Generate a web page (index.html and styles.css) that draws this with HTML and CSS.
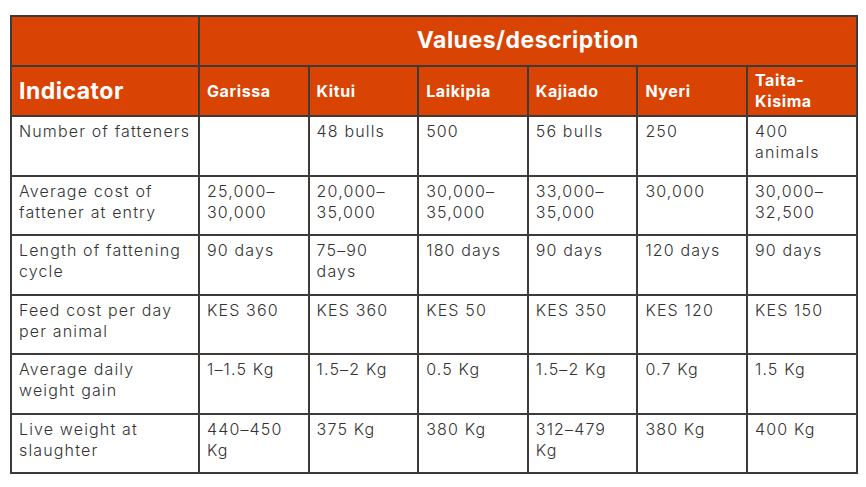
FILE: index.html
```html
<!DOCTYPE html>
<html>
<head>
<meta charset="utf-8">
<link rel="stylesheet" href="styles.css">
</head>
<body>
<table class="data">
  <colgroup>
    <col class="c-ind"><col class="c-v"><col class="c-v"><col class="c-v"><col class="c-v"><col class="c-v"><col class="c-v">
  </colgroup>
  <thead>
    <tr class="h1">
      <th></th>
      <th colspan="6" class="values">Values/description</th>
    </tr>
    <tr class="h2">
      <th class="ind">Indicator</th>
      <th>Garissa</th>
      <th>Kitui</th>
      <th>Laikipia</th>
      <th>Kajiado</th>
      <th>Nyeri</th>
      <th>Taita-<br>Kisima</th>
    </tr>
  </thead>
  <tbody>
    <tr>
      <td>Number of fatteners</td><td></td><td>48 bulls</td><td>500</td><td>56 bulls</td><td>250</td><td>400<br>animals</td>
    </tr>
    <tr>
      <td>Average cost of<br>fattener at entry</td><td>25,000–<br>30,000</td><td>20,000–<br>35,000</td><td>30,000–<br>35,000</td><td>33,000–<br>35,000</td><td>30,000</td><td>30,000–<br>32,500</td>
    </tr>
    <tr>
      <td>Length of fattening<br>cycle</td><td>90 days</td><td>75–90<br>days</td><td>180 days</td><td>90 days</td><td>120 days</td><td>90 days</td>
    </tr>
    <tr>
      <td>Feed cost per day<br>per animal</td><td>KES 360</td><td>KES 360</td><td>KES 50</td><td>KES 350</td><td>KES 120</td><td>KES 150</td>
    </tr>
    <tr>
      <td>Average daily<br>weight gain</td><td>1–1.5 Kg</td><td>1.5–2 Kg</td><td>0.5 Kg</td><td>1.5–2 Kg</td><td>0.7 Kg</td><td>1.5 Kg</td>
    </tr>
    <tr>
      <td>Live weight at<br>slaughter</td><td>440–450<br>Kg</td><td>375 Kg</td><td>380 Kg</td><td>312–479<br>Kg</td><td>380 Kg</td><td>400 Kg</td>
    </tr>
  </tbody>
</table>
</body>
</html>
```
FILE: styles.css
```css
html, body {
  margin: 0;
  padding: 0;
  background: #ffffff;
}
body {
  padding: 15px 0 0 10px;
  font-family: Inter, "Open Sans", sans-serif;
  color: #333333;
}
.data {
  border-collapse: collapse;
  table-layout: fixed;
  width: 846px;
}
.c-ind { width: 188px; }
.c-v { width: 109.6px; }
.data th, .data td {
  border: 2px solid #3d3a38;
  text-align: left;
}
.data thead th {
  background: #d94405;
  color: #ffffff;
  font-weight: 700;
  vertical-align: middle;
  padding: 0 7px;
  font-size: 16px;
  line-height: 21px;
  letter-spacing: 0.6px;
}
.h1 { height: 50px; }
.h2 { height: 50px; }
.data thead th.values {
  text-align: center;
  font-size: 23px;
  letter-spacing: 0.5px;
  padding-bottom: 2px;
}
.data thead th.ind {
  font-size: 23px;
  letter-spacing: 0.5px;
}
.data tbody td {
  vertical-align: top;
  height: 59.5px;
  box-sizing: border-box;
  padding: 4px 6px 0 7px;
  font-size: 16px;
  line-height: 21px;
  font-weight: 300;
  letter-spacing: 1.15px;
}
```
